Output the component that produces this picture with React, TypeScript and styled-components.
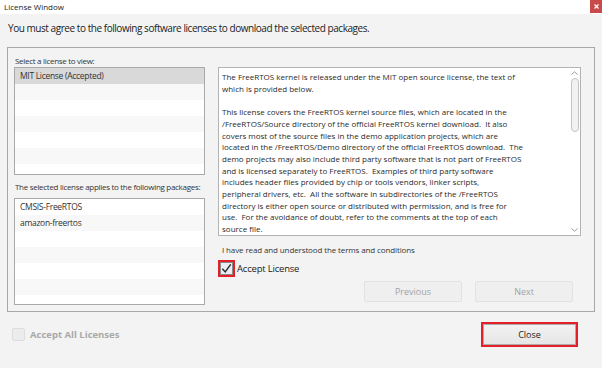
import styled, { createGlobalStyle } from 'styled-components'

const GlobalStyle = createGlobalStyle`
  html, body {
    margin: 0;
    padding: 0;
    background: #f3f3f3;
  }
  * {
    box-sizing: border-box;
  }
`

const licenseText = [
  'The FreeRTOS kernel is released under the MIT open source license, the text of',
  'which is provided below.',
  '',
  'This license covers the FreeRTOS kernel source files, which are located in the',
  '/FreeRTOS/Source directory of the official FreeRTOS kernel download.  It also',
  'covers most of the source files in the demo application projects, which are',
  'located in the /FreeRTOS/Demo directory of the official FreeRTOS download.  The',
  'demo projects may also include third party software that is not part of FreeRTOS',
  'and is licensed separately to FreeRTOS.  Examples of third party software',
  'includes header files provided by chip or tools vendors, linker scripts,',
  'peripheral drivers, etc.  All the software in subdirectories of the /FreeRTOS',
  'directory is either open source or distributed with permission, and is free for',
  'use.  For the avoidance of doubt, refer to the comments at the top of each',
  'source file.',
]

const licenses = ['MIT License (Accepted)', '', '', '', '', '', '']
const packages = ['CMSIS-FreeRTOS', 'amazon-freertos', '', '', '', '', '']

const App = () => {
  return (
    <>
      <GlobalStyle />
      <Window>
        <TitleBar>
          <TitleText>License Window</TitleText>
          <CloseX>
            <svg width="5" height="5" viewBox="0 0 5 5">
              <path d="M0.5 0.5 L4.5 4.5 M4.5 0.5 L0.5 4.5" stroke="#ffffff" strokeWidth="1.2" />
            </svg>
          </CloseX>
        </TitleBar>
        <Heading>You must agree to the following software licenses to download the selected packages.</Heading>
        <GroupBox>
          <LeftColumn>
            <Label>Select a license to view:</Label>
            <ListBox>
              {licenses.map((name, i) => (
                <ListRow key={i} $selected={i === 0} $odd={i % 2 === 1}>
                  {name}
                </ListRow>
              ))}
            </ListBox>
            <Label $top={5}>The selected license applies to the following packages:</Label>
            <ListBox $grow>
              {packages.map((name, i) => (
                <ListRow key={i} $odd={i % 2 === 1}>
                  {name}
                </ListRow>
              ))}
            </ListBox>
          </LeftColumn>
          <RightColumn>
            <TextPane>
              <LicenseBody>{licenseText.join('\n')}</LicenseBody>
              <ScrollBar>
                <Arrow viewBox="0 0 7 4">
                  <path d="M0.5 3.5 L3.5 0.8 L6.5 3.5" fill="none" stroke="#9a9a9a" strokeWidth="1" />
                </Arrow>
                <Thumb />
                <Spacer />
                <Arrow viewBox="0 0 7 4">
                  <path d="M0.5 0.5 L3.5 3.2 L6.5 0.5" fill="none" stroke="#9a9a9a" strokeWidth="1" />
                </Arrow>
              </ScrollBar>
            </TextPane>
            <TermsText>I have read and understood the terms and conditions</TermsText>
            <AcceptRow>
              <Highlight>
                <CheckBox>
                  <svg width="12" height="11" viewBox="0 0 12 11">
                    <path d="M1.5 5.8 L4.6 9.2 L10.6 1" fill="none" stroke="#2b2b2b" strokeWidth="1.6" />
                  </svg>
                </CheckBox>
              </Highlight>
              <AcceptLabel>Accept License</AcceptLabel>
            </AcceptRow>
            <NavRow>
              <NavButton disabled>Previous</NavButton>
              <NavButton disabled>Next</NavButton>
            </NavRow>
          </RightColumn>
        </GroupBox>
        <Footer>
          <AllRow>
            <CheckBox $disabled />
            <AllLabel>Accept All Licenses</AllLabel>
          </AllRow>
          <Highlight>
            <CloseButton>Close</CloseButton>
          </Highlight>
        </Footer>
      </Window>
    </>
  )
}

const Window = styled.div`
  width: 602px;
  height: 368px;
  background: #f3f3f3;
  font-family: 'Open Sans', 'Noto Sans', sans-serif;
  color: #222;
  display: flex;
  flex-direction: column;
  overflow: hidden;
`

const TitleBar = styled.div`
  height: 14px;
  background: #ffffff;
  display: flex;
  align-items: flex-start;
  justify-content: space-between;
`

const TitleText = styled.span`
  font-size: 8px;
  line-height: 14px;
  padding-left: 4px;
  color: #1a1a1a;
`

const CloseX = styled.div`
  flex: none;
  width: 12px;
  height: 13px;
  background: #c94a4a;
  display: flex;
  align-items: center;
  justify-content: center;
`

const Heading = styled.div`
  font-size: 10px;
  letter-spacing: -0.45px;
  line-height: 16px;
  padding: 6px 0 0 8px;
  height: 33px;
  color: #222;
`

const GroupBox = styled.div`
  margin: 0 7px;
  height: 265px;
  border: 1px solid #a8a8a8;
  display: flex;
  gap: 13px;
  padding: 6px 13px 6px 6px;
`

const LeftColumn = styled.div`
  width: 191px;
  display: flex;
  flex-direction: column;
`

const Label = styled.div<{ $top?: number }>`
  font-size: 8px;
  letter-spacing: -0.3px;
  line-height: 13px;
  white-space: nowrap;
  padding-left: 1px;
  margin-top: ${({ $top }) => $top ?? 0}px;
  margin-bottom: ${({ $top }) => ($top ? 5 : 0)}px;
  color: #333;
`

const ListBox = styled.div<{ $grow?: boolean }>`
  height: 108px;
  flex: ${({ $grow }) => ($grow ? 1 : 'none')};
  border: 1px solid #a9a9a9;
  background: #ffffff;
  overflow: hidden;
`

const ListRow = styled.div<{ $selected?: boolean; $odd?: boolean }>`
  height: 16px;
  font-size: 8.5px;
  letter-spacing: -0.3px;
  line-height: 16px;
  padding-left: 5px;
  color: #333;
  background: ${({ $selected, $odd }) => ($selected ? '#d9d9d9' : $odd ? '#f8f8f8' : '#ffffff')};
`

const RightColumn = styled.div`
  flex: 1;
  display: flex;
  flex-direction: column;
`

const TextPane = styled.div`
  height: 169px;
  margin-top: 13px;
  border: 1px solid #b3b3b3;
  background: #fff;
  display: flex;
  overflow: hidden;
`

const LicenseBody = styled.div`
  flex: 1;
  white-space: pre;
  font-size: 8px;
  line-height: 11.7px;
  padding: 3px 0 0 3px;
  color: #2a2a2a;
  overflow: hidden;
`

const ScrollBar = styled.div`
  width: 11px;
  display: flex;
  flex-direction: column;
  align-items: center;
  padding: 2px 0;
`

const Arrow = styled.svg`
  width: 7px;
  height: 4px;
  margin: 1px 0;
`

const Thumb = styled.div`
  width: 8px;
  height: 54px;
  margin-top: 2px;
  border: 1px solid #c4c4c4;
  border-radius: 4px;
  background: #f2f2f2;
`

const Spacer = styled.div`
  flex: 1;
`

const TermsText = styled.div`
  font-size: 8px;
  letter-spacing: -0.12px;
  line-height: 12px;
  margin-top: 8px;
  padding-left: 4px;
  color: #333;
`

const AcceptRow = styled.div`
  display: flex;
  align-items: center;
  gap: 2px;
  margin-top: 4px;
`

const Highlight = styled.div`
  border: 2px solid #e3202a;
  display: flex;
`

const CheckBox = styled.div<{ $disabled?: boolean }>`
  width: 13px;
  height: 13px;
  border: 1px solid ${({ $disabled }) => ($disabled ? '#dddddd' : '#8a8a8a')};
  background: ${({ $disabled }) => ($disabled ? '#ececec' : '#e8eef3')};
  display: flex;
  align-items: center;
  justify-content: center;
  border-radius: ${({ $disabled }) => ($disabled ? 2 : 0)}px;
`

const AcceptLabel = styled.span`
  font-size: 9.5px;
  letter-spacing: -0.2px;
  color: #222;
`

const NavRow = styled.div`
  display: flex;
  justify-content: flex-end;
  gap: 13px;
  padding-right: 8px;
  margin-top: 4px;
`

const NavButton = styled.button`
  width: 98px;
  height: 21px;
  font-family: inherit;
  font-size: 9px;
  color: #a3a3a3;
  background: #efefef;
  border: 1px solid #e2e2e2;
  border-radius: 2px;
  padding: 0;
`

const Footer = styled.div`
  display: flex;
  align-items: center;
  justify-content: space-between;
  padding: 10px 24px 0 12px;
`

const AllRow = styled.div`
  display: flex;
  align-items: center;
  gap: 5px;
`

const AllLabel = styled.span`
  font-size: 9.5px;
  font-weight: bold;
  color: #a8a8a8;
`

const CloseButton = styled.button`
  width: 93px;
  height: 21px;
  font-family: inherit;
  font-size: 9px;
  color: #222;
  background: linear-gradient(#f2f2f2, #e6e6e6);
  border: 1px solid #acacac;
  padding: 0;
`

export default App
